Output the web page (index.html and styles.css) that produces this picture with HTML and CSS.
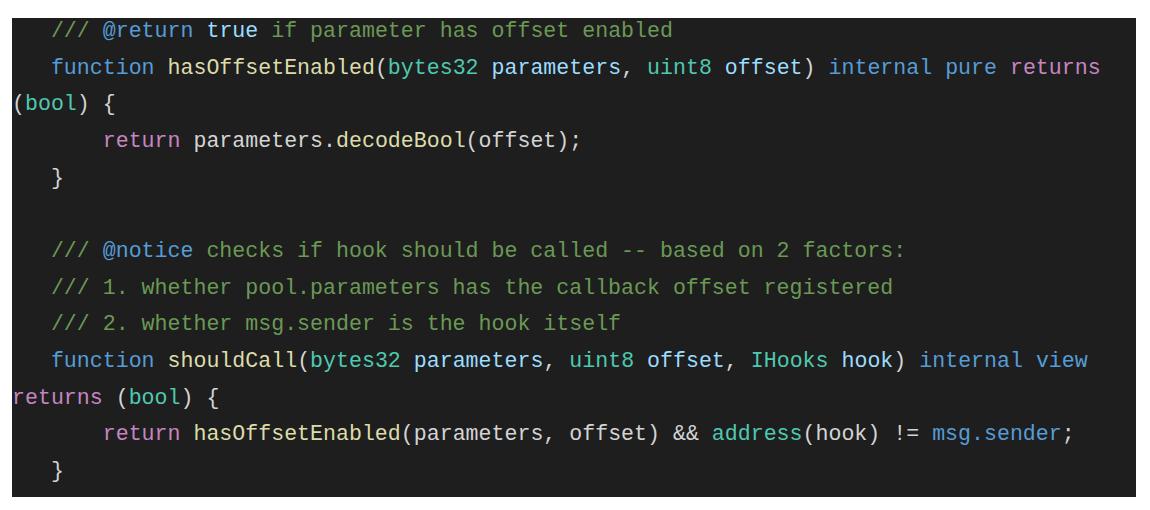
FILE: index.html
```html
<!DOCTYPE html>
<html>
<head>
<meta charset="utf-8">
<link rel="stylesheet" href="styles.css">
</head>
<body>
<div class="page">
  <div class="code-block">
    <div class="code">
<div class="line">   <span class="c">/// </span><span class="tag">@return</span> <span class="v">true</span><span class="c"> if parameter has offset enabled</span></div>
<div class="line">   <span class="k">function</span> <span class="f">hasOffsetEnabled</span>(<span class="t">bytes32</span> <span class="v">parameters</span>, <span class="t">uint8</span> <span class="v">offset</span>) <span class="k">internal</span> <span class="k">pure</span> <span class="r">returns</span></div>
<div class="line">(<span class="t">bool</span>) {</div>
<div class="line">       <span class="r">return</span> parameters.<span class="f">decodeBool</span>(offset);</div>
<div class="line">   }</div>
<div class="line"> </div>
<div class="line">   <span class="c">/// </span><span class="tag">@notice</span><span class="c"> checks if hook should be called -- based on 2 factors:</span></div>
<div class="line">   <span class="c">/// 1. whether pool.parameters has the callback offset registered</span></div>
<div class="line">   <span class="c">/// 2. whether msg.sender is the hook itself</span></div>
<div class="line">   <span class="k">function</span> <span class="f">shouldCall</span>(<span class="t">bytes32</span> <span class="v">parameters</span>, <span class="t">uint8</span> <span class="v">offset</span>, <span class="t">IHooks</span> <span class="v">hook</span>) <span class="k">internal</span> <span class="k">view</span></div>
<div class="line"><span class="r">returns</span> (<span class="t">bool</span>) {</div>
<div class="line">       <span class="r">return</span> <span class="f">hasOffsetEnabled</span>(parameters, offset) &amp;&amp; <span class="t">address</span>(hook) != <span class="k">msg.sender</span>;</div>
<div class="line">   }</div>
    </div>
  </div>
</div>
</body>
</html>
```

FILE: styles.css
```css
html, body {
  margin: 0;
  padding: 0;
  background: #ffffff;
}

.page {
  width: 1150px;
  height: 510px;
  padding: 18px 0 0 12px;
  box-sizing: border-box;
}

.code-block {
  width: 1124px;
  height: 479px;
  background: #1e1e1e;
  overflow: hidden;
}

.code {
  padding-top: 1px;
  font-family: "Liberation Mono", "Courier New", monospace;
  font-size: 21.6px;
  color: #d4d4d4;
}

.line {
  height: 24px;
  line-height: 24px;
  padding-bottom: 12.67px;
  white-space: pre;
}

.c { color: #6a9955; }
.tag { color: #569cd6; }
.k { color: #569cd6; }
.v { color: #9cdcfe; }
.f { color: #dcdcaa; }
.t { color: #4ec9b0; }
.r { color: #c586c0; }
```
